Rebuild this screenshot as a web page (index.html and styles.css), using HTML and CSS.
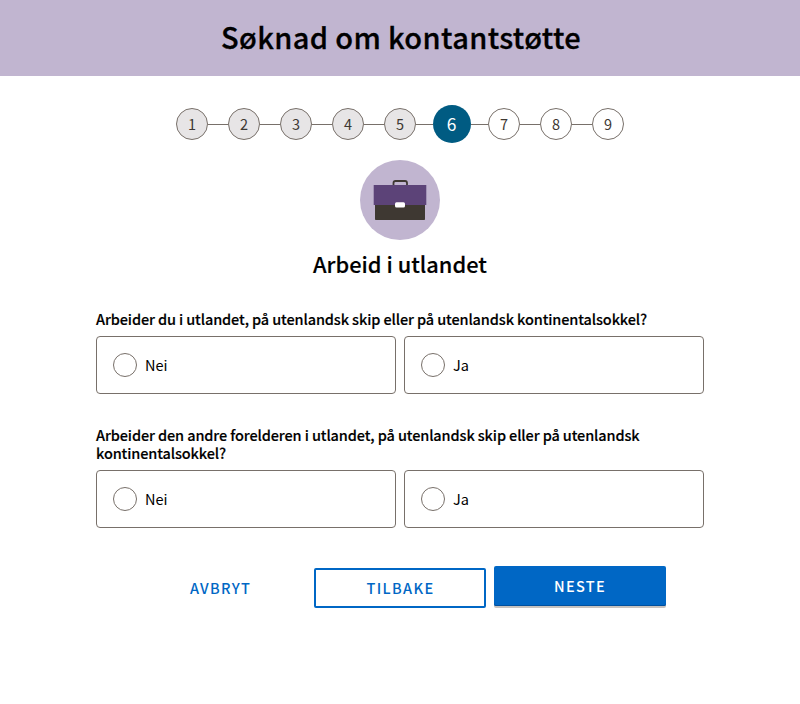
FILE: index.html
```html
<!DOCTYPE html>
<html lang="nb">
<head>
<meta charset="utf-8">
<title>Søknad om kontantstøtte</title>
<link rel="stylesheet" href="styles.css">
</head>
<body>
<header class="banner"><h1>Søknad om kontantstøtte</h1></header>
<main class="page">
  <ol class="steps">
    <li class="step done">1</li><li class="step done">2</li><li class="step done">3</li><li class="step done">4</li><li class="step done">5</li><li class="step active">6</li><li class="step">7</li><li class="step">8</li><li class="step">9</li>
  </ol>
  <svg class="badge" width="80" height="80" viewBox="0 0 80 80" aria-hidden="true">
    <circle cx="40" cy="40" r="40" fill="#c1b5d0"/>
    <path d="M33.500 26v-3a2 2 0 0 1 2-2h9.500a2 2 0 0 1 2 2V26" fill="none" stroke="#3e3832" stroke-width="1.800"/>
    <rect x="15" y="43" width="50" height="17" rx=".8" fill="#3e3832"/>
    <path d="M13.700 25h52.600v20H13.700z" fill="#5c4378"/>
    <path d="M35 45h10v2.600H35z" fill="#3e3832"/>
    <rect x="35" y="42.300" width="10" height="5.200" rx="1.500" fill="#fff"/>
  </svg>
  <h2>Arbeid i utlandet</h2>
  <form class="form">
    <fieldset class="question">
      <legend>Arbeider du i utlandet, på utenlandsk skip eller på utenlandsk kontinentalsokkel?</legend>
      <div class="options"><label class="option"><span class="radio"></span>Nei</label><label class="option"><span class="radio"></span>Ja</label></div>
    </fieldset>
    <fieldset class="question">
      <legend>Arbeider den andre forelderen i utlandet, på utenlandsk skip eller på utenlandsk kontinentalsokkel?</legend>
      <div class="options"><label class="option"><span class="radio"></span>Nei</label><label class="option"><span class="radio"></span>Ja</label></div>
    </fieldset>
    <div class="actions">
      <button type="button" class="btn flat">Avbryt</button>
      <button type="button" class="btn outline">Tilbake</button>
      <button type="button" class="btn primary">Neste</button>
    </div>
  </form>
</main>
</body>
</html>
```
FILE: styles.css
```css
* { box-sizing: border-box; }
body { margin: 0; background: #fff; color: #000; font: 14.500px/22px "Noto Sans CJK SC", "Noto Sans", sans-serif; }
h1, h2 { margin: 0; font-weight: 500; text-align: center; }
.banner { height: 76px; background: #c1b5d0; }
h1 { padding-left: 2px; font-size: 29px; line-height: 72px; letter-spacing: .36px; -webkit-text-stroke: .3px #000; }
.page { width: 608px; margin: 0 auto; padding-top: 28px; }
.steps { display: flex; justify-content: center; align-items: center; height: 40px; margin: 0; padding: 0; list-style: none; }
.step { display: flex; align-items: center; justify-content: center; width: 32px; height: 32px; margin-right: 20px; border: 1px solid #78706a; border-radius: 50%; color: #3e3832; font-size: 14.500px; position: relative; }
.step:last-child { margin-right: 0; }
.step + .step::before { content: ""; position: absolute; right: 31px; top: 15px; width: 20px; height: 1px; background: #78706a; }
.done { background: #e7e5e6; }
.active { width: 38px; height: 38px; margin: 0 17px 0 -3px; padding-right: 1px; border: 0; background: #005b82; color: #fff; font-size: 17.400px; }
.step.active::before { right: 38px; top: 19px; width: 17px; }
.active + .step::before { width: 17px; }
.badge { display: block; margin: 16px auto 0; }
h2 { margin-top: 8px; font-size: 21.800px; line-height: 32px; -webkit-text-stroke: .15px #000; }
.form { margin-top: 30px; }
.question { min-width: 0; margin: 0 0 32px; padding: 0; border: 0; }
legend { padding: 0; margin-bottom: 8px; font-weight: 500; line-height: 18px; letter-spacing: -.114px; -webkit-text-stroke: .15px #000; }
.options { display: grid; grid-template-columns: 1fr 1fr; gap: 8px; }
.option { display: flex; align-items: center; height: 58px; padding: 0 16px; border: 1px solid #78706a; border-radius: 4px; }
.radio { width: 24px; height: 24px; margin-right: 8px; border: 1px solid #78706a; border-radius: 50%; }
.actions { display: flex; justify-content: center; align-items: flex-start; gap: 8px; margin-top: 38px; }
.btn { width: 172px; height: 40px; margin: 2px 0 0; padding: 0 0 0 1px; border: 2px solid transparent; border-radius: 2px; background: none; color: #0067c5; font: inherit; font-weight: 500; letter-spacing: 1.350px; text-transform: uppercase; }
.outline { border-color: #0067c5; }
.primary { margin-top: 0; padding: 0; border: 0; background: #0067c5; color: #fff; box-shadow: inset 0 -1px #00509e, 0 2px #c6c2bf; }
```
